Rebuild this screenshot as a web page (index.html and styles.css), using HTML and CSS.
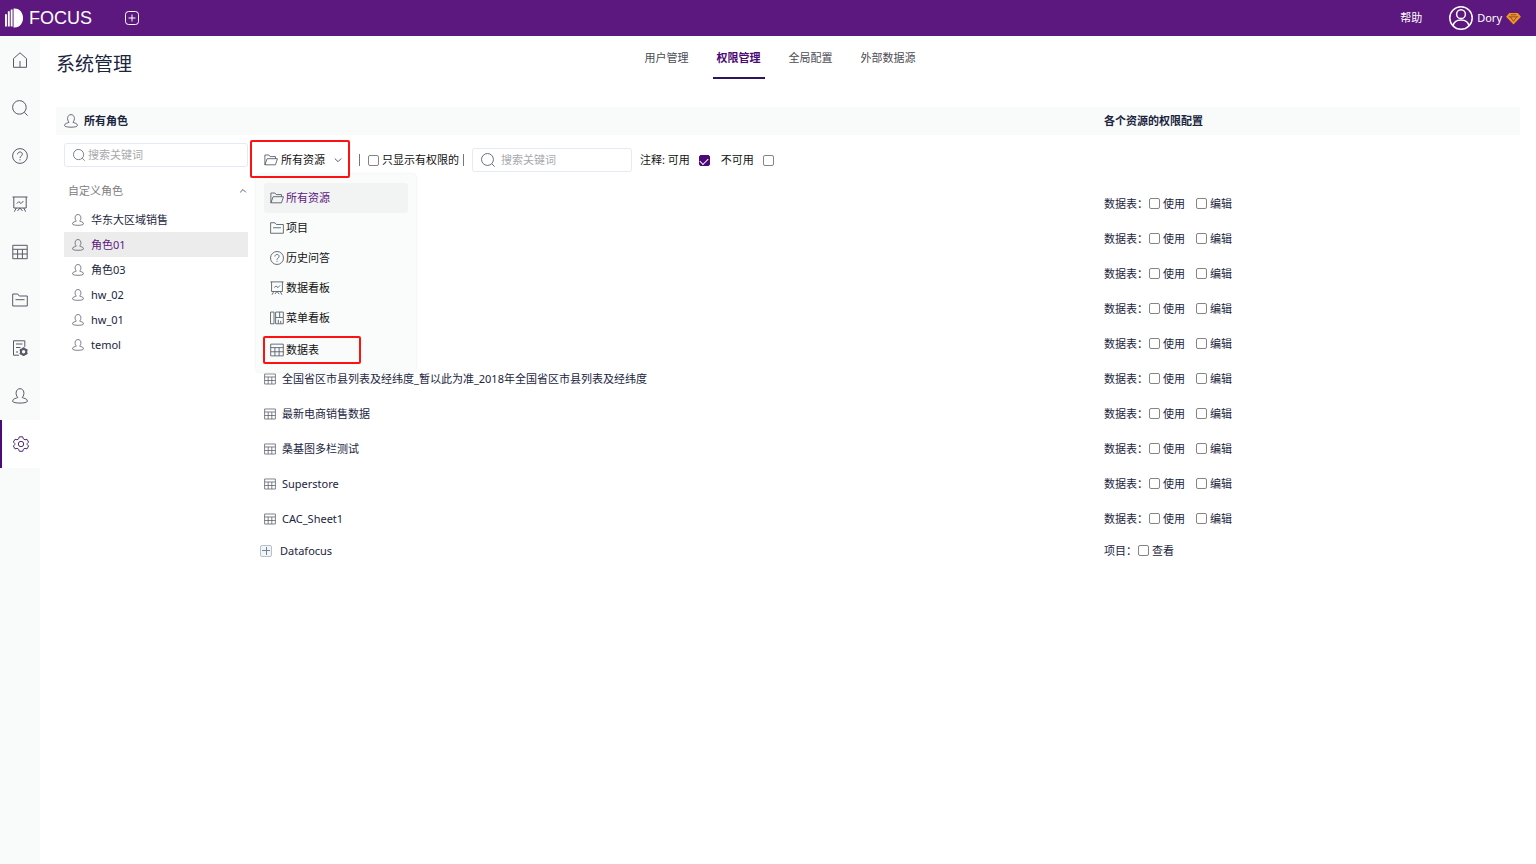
FILE: index.html
```html
<!DOCTYPE html>
<html lang="zh-CN">
<head>
<meta charset="utf-8">
<title>系统管理</title>
<link rel="stylesheet" href="styles.css">
</head>
<body>
<svg class="sprite" aria-hidden="true">
  <symbol id="i-home" viewBox="0 0 16 16"><path d="M1.5 6.6 8 .8l6.5 5.8v8.7h-13zM8 15V9"/></symbol>
  <symbol id="i-search" viewBox="0 0 16 16"><circle cx="7.4" cy="7.4" r="6.8"/><path d="m12.3 12.3 3.3 3.3"/></symbol>
  <symbol id="i-help" viewBox="0 0 16 16"><circle cx="8" cy="8" r="7.4"/><path d="M5.6 6.3C5.6 3.2 10.4 3.2 10.4 6.2 10.4 8 8 8 8 10M8 11.2v1.2"/></symbol>
  <symbol id="i-board" viewBox="0 0 16 16"><path d="M.5 1h15M1.8 1v11h12.4V1M4.8 7.6l2-2 2.2 2 2.4-2.600M4.300 12l-2 3.700M11.700 12l2 3.700M5.500 15 8 12l2.500 3"/></symbol>
  <symbol id="i-table" viewBox="0 0 16 16"><path d="M.8 1.3h14.4v13.4H.8zM.8 5.3h14.4M.8 10h14.4M5.6 5.3v9.4M10.4 5.3v9.4"/></symbol>
  <symbol id="i-folder" viewBox="0 0 16 16"><path d="M.7 14V2h5l1.6 2h8v10zM3.5 7.7h9"/></symbol>
  <symbol id="i-open" viewBox="0 0 16 16"><path d="M1 13.5V2.3h4.6l1.5 1.8h6v2.4M1 13.5 3.6 6.5h11.8l-2.3 7z"/></symbol>
  <symbol id="i-doc" viewBox="0 0 16 16"><path d="M7 15.2H1.5V.8h11.3v6M4 4h6.5M4 7.5h4.500M4 12h2"/><circle cx="11.6" cy="11.7" r="2.700" stroke-width="2"/><path d="M11.6 7.300v1.700M11.6 14.400v1.600M7.800 9.500l1.500.9M13.9 13l1.500.9M7.800 13.900l1.500-.9M13.900 10.400l1.500-.9" stroke-width="2"/></symbol>
  <symbol id="i-user" viewBox="0 0 16 16"><path d="M5.8 9.5C3 6.700 3.600.7 8 .7s5 6 2.200 8.800c1.500 1 5.200.8 5.200 3.700 0 2.500-14.800 2.500-14.800 0 0-2.900 3.700-2.700 5.200-3.700z"/></symbol>
  <symbol id="i-gear" viewBox="0 0 16 16"><circle cx="8" cy="8" r="2.700"/><path d="M6.300.8h3.400l.6 2 1.700 1 2-.5 1.600 2.800-1.400 1.500v1l1.400 1.400-1.600 2.900-2-.6-1.700 1-.6 2H6.300l-.6-2-1.700-1-2 .6L.4 10l1.400-1.400v-1L.4 6.100 2 3.300l2 .5 1.700-1z"/></symbol>
  <symbol id="i-menu" viewBox="0 0 16 16"><path d="M.6 1.200h4v13.400h-4zM6.400 1.200h8.800v6M6.400 1.200v13.400h8.800v-7M6.400 7.400h8.800M9.500 14V10M12.200 14v-2.700M11 1.200v6"/></symbol>
  <symbol id="i-plus" viewBox="0 0 16 16"><rect x="1.500" y="1.500" width="13" height="13" rx="3"/><path d="M8 4.500v7M4.500 8h7"/></symbol>
  <symbol id="i-down" viewBox="0 0 8 8"><path d="m.8 2.500 3.200 3.200 3.200-3.200"/></symbol>
  <symbol id="i-up" viewBox="0 0 8 8"><path d="m1.200 5.300 2.800-2.800 2.800 2.800"/></symbol>
  <symbol id="i-avatar" viewBox="0 0 24 24"><circle cx="12" cy="12" r="11.200"/><circle cx="12" cy="8.200" r="4.400"/><path d="M4 20c1.500-8 14.500-8 16 0"/></symbol>
</svg>

<header class="topbar">
  <a class="brand" href="#">
    <svg class="brand-mark" viewBox="0 0 20 20"><path d="M0 6h2v13H0zM3 3h2v16H3zM6 1h2v18H6zM9 0h1v20H9zM10 0c12 0 12 20 0 20z"/></svg>
    <span>FOCUS</span>
  </a>
  <button class="add" aria-label="新建"><svg class="icon"><use href="#i-plus"/></svg></button>
  <a class="help" href="#">帮助</a>
  <button class="account">
    <svg class="avatar"><use href="#i-avatar"/></svg>
    <span>Dory</span>
    <svg class="gem" viewBox="0 0 16 14"><path class="gem-body" d="M3.500 1h9L16 5.200 8 13.500 0 5.200z"/><path class="gem-line" d="M3 5.200h10M4.500 5l3.500 5 3.500-5M5 3h6"/></svg>
  </button>
</header>

<div class="shell">
  <nav class="rail">
    <a href="#" aria-label="首页"><svg class="icon"><use href="#i-home"/></svg></a>
    <a href="#" aria-label="搜索"><svg class="icon"><use href="#i-search"/></svg></a>
    <a href="#" aria-label="问答"><svg class="icon"><use href="#i-help"/></svg></a>
    <a href="#" aria-label="看板"><svg class="icon"><use href="#i-board"/></svg></a>
    <a href="#" aria-label="数据表"><svg class="icon"><use href="#i-table"/></svg></a>
    <a href="#" aria-label="项目"><svg class="icon"><use href="#i-folder"/></svg></a>
    <a href="#" aria-label="任务"><svg class="icon"><use href="#i-doc"/></svg></a>
    <a href="#" aria-label="用户"><svg class="icon"><use href="#i-user"/></svg></a>
    <a href="#" aria-label="系统" class="active"><svg class="icon"><use href="#i-gear"/></svg></a>
  </nav>

  <main class="page">
    <div class="page-head">
      <h1>系统管理</h1>
      <nav class="tabs">
        <a href="#">用户管理</a>
        <a href="#" class="current">权限管理</a>
        <a href="#">全局配置</a>
        <a href="#">外部数据源</a>
      </nav>
    </div>

    <div class="band">
      <h2><svg class="icon-m"><use href="#i-user"/></svg>所有角色</h2>
      <h2 class="band-right">各个资源的权限配置</h2>
    </div>

    <div class="columns">
      <aside class="roles">
        <label class="search">
          <svg class="icon-s"><use href="#i-search"/></svg>
          <input type="text" placeholder="搜索关键词" aria-label="搜索角色">
        </label>
        <button class="group">自定义角色<svg class="chev"><use href="#i-up"/></svg></button>
        <ul class="role-list">
          <li><button><svg class="icon-s"><use href="#i-user"/></svg>华东大区域销售</button></li>
          <li><button class="selected"><svg class="icon-s"><use href="#i-user"/></svg>角色01</button></li>
          <li><button><svg class="icon-s"><use href="#i-user"/></svg>角色03</button></li>
          <li><button><svg class="icon-s"><use href="#i-user"/></svg>hw_02</button></li>
          <li><button><svg class="icon-s"><use href="#i-user"/></svg>hw_01</button></li>
          <li><button><svg class="icon-s"><use href="#i-user"/></svg>temol</button></li>
        </ul>
      </aside>

      <section class="resources">
        <div class="toolbar">
          <div class="filter">
            <button class="filter-button marked" aria-haspopup="true" aria-expanded="true">
              <svg class="icon-m"><use href="#i-open"/></svg>所有资源<svg class="chev"><use href="#i-down"/></svg>
            </button>
            <div class="menu">
              <button class="selected"><svg class="icon-m"><use href="#i-open"/></svg>所有资源</button>
              <button><svg class="icon-m"><use href="#i-folder"/></svg>项目</button>
              <button><svg class="icon-m"><use href="#i-help"/></svg>历史问答</button>
              <button><svg class="icon-m"><use href="#i-board"/></svg>数据看板</button>
              <button><svg class="icon-m"><use href="#i-menu"/></svg>菜单看板</button>
              <button class="marked"><svg class="icon-m"><use href="#i-table"/></svg>数据表</button>
            </div>
          </div>
          <label class="only"><input type="checkbox">只显示有权限的</label>
          <label class="search wide">
            <svg class="icon-m"><use href="#i-search"/></svg>
            <input type="text" placeholder="搜索关键词" aria-label="搜索资源">
          </label>
          <div class="legend">
            <label>注释: 可用<input type="checkbox" checked></label>
            <label>不可用<input type="checkbox"></label>
          </div>
        </div>

        <table class="grid">
          <tbody>
            <tr><td></td><td class="perm"><div>数据表：<label><input type="checkbox">使用</label><label><input type="checkbox">编辑</label></div></td></tr>
            <tr><td></td><td class="perm"><div>数据表：<label><input type="checkbox">使用</label><label><input type="checkbox">编辑</label></div></td></tr>
            <tr><td></td><td class="perm"><div>数据表：<label><input type="checkbox">使用</label><label><input type="checkbox">编辑</label></div></td></tr>
            <tr><td></td><td class="perm"><div>数据表：<label><input type="checkbox">使用</label><label><input type="checkbox">编辑</label></div></td></tr>
            <tr><td></td><td class="perm"><div>数据表：<label><input type="checkbox">使用</label><label><input type="checkbox">编辑</label></div></td></tr>
            <tr><td><div class="name"><svg class="icon-s"><use href="#i-table"/></svg>全国省区市县列表及经纬度_暂以此为准_2018年全国省区市县列表及经纬度</div></td><td class="perm"><div>数据表：<label><input type="checkbox">使用</label><label><input type="checkbox">编辑</label></div></td></tr>
            <tr><td><div class="name"><svg class="icon-s"><use href="#i-table"/></svg>最新电商销售数据</div></td><td class="perm"><div>数据表：<label><input type="checkbox">使用</label><label><input type="checkbox">编辑</label></div></td></tr>
            <tr><td><div class="name"><svg class="icon-s"><use href="#i-table"/></svg>桑基图多栏测试</div></td><td class="perm"><div>数据表：<label><input type="checkbox">使用</label><label><input type="checkbox">编辑</label></div></td></tr>
            <tr><td><div class="name"><svg class="icon-s"><use href="#i-table"/></svg>Superstore</div></td><td class="perm"><div>数据表：<label><input type="checkbox">使用</label><label><input type="checkbox">编辑</label></div></td></tr>
            <tr><td><div class="name"><svg class="icon-s"><use href="#i-table"/></svg>CAC_Sheet1</div></td><td class="perm"><div>数据表：<label><input type="checkbox">使用</label><label><input type="checkbox">编辑</label></div></td></tr>
            <tr class="project"><td><div class="name"><button class="expand" aria-label="展开"></button>Datafocus</div></td><td class="perm"><div>项目：<label><input type="checkbox">查看</label></div></td></tr>
          </tbody>
        </table>
      </section>
    </div>
  </main>
</div>
</body>
</html>
```
FILE: styles.css
```css
* { box-sizing: border-box; }

body {
  margin: 0;
  min-height: 100vh;
  display: flex;
  flex-direction: column;
  background: #fff;
  color: #1b2540;
  font: 11px/16px "Noto Sans", "Noto Sans CJK SC", sans-serif;
}

a { color: inherit; text-decoration: none; }
button { border: 0; padding: 0; background: none; color: inherit; font: inherit; cursor: pointer; }
h1, h2, ul { margin: 0; padding: 0; }
ul { list-style: none; }

svg { flex: none; fill: none; stroke: #555b66; stroke-width: 1; }
.sprite { position: absolute; width: 0; height: 0; }
.icon { width: 16px; height: 16px; }
.icon-m { width: 14px; height: 14px; }
.icon-s { width: 12px; height: 12px; }
.chev { width: 8px; height: 8px; }

/* Top bar */
.topbar {
  height: 36px;
  padding: 0 16px 0 5px;
  display: flex;
  align-items: center;
  background: #5c187e;
  color: #fff;
}
.brand { display: flex; align-items: center; gap: 5px; font: 18px/20px "Liberation Sans", sans-serif; }
.brand-mark { width: 19px; height: 20px; fill: #fff; stroke: none; }
.add { display: flex; margin-left: 32px; }
.topbar .icon, .avatar { stroke: #fff; }
.help { margin-left: auto; }
.account { display: flex; align-items: center; gap: 4px; margin-left: 27px; }
.avatar { width: 24px; height: 24px; stroke-width: 1.500; }
.gem { width: 15px; height: 13px; margin-right: -1px; }
.gem-body { fill: #f2961d; stroke: none; }
.gem-line { stroke: #8a4a3c; }

/* Side rail */
.shell { flex: 1; display: flex; }
.rail { width: 40px; background: #f9fbfb; }
.rail a { height: 48px; display: flex; align-items: center; justify-content: center; }
.rail .active { border-left: 2px solid #4b0a75; background: #fff; }
.rail .active svg { stroke: #4d2a72; }

.page { flex: 1; min-width: 0; padding: 0 16px; }
.page-head { height: 71px; display: grid; grid-template-columns: 1fr auto 1fr; align-items: start; }
.page-head h1 { padding-top: 14px; font-size: 19px; line-height: 28px; font-weight: 400; }
.tabs { display: flex; gap: 20px; margin-right: 16px; padding-top: 6px; color: #4c4c55; }
.tabs a { padding: 8px 4px 11px; border-bottom: 2px solid transparent; }
.tabs .current { border-color: #2b1560; color: #4b0a75; font-weight: 700; }

.band {
  height: 28px;
  padding-left: 8px;
  display: flex;
  align-items: center;
  justify-content: space-between;
  background: #f9fbfb;
}
.band h2 { display: flex; align-items: center; gap: 6px; font-size: 11px; font-weight: 700; }
.band .band-right { width: 416px; }

.columns { display: flex; padding-left: 8px; }

/* Roles */
.roles { width: 184px; padding-top: 8px; }
.search {
  height: 24px;
  padding: 0 8px;
  display: flex;
  align-items: center;
  gap: 3px;
  border: 1px solid #e4eaf3;
  border-radius: 3px;
}
.search input { flex: 1; min-width: 0; padding: 0; border: 0; outline: 0; background: none; font: inherit; }
.search input::placeholder { color: #a9a9ad; }
.group {
  width: 100%;
  height: 24px;
  margin: 12px 0 4px;
  padding: 0 1px 0 4px;
  display: flex;
  align-items: center;
  justify-content: space-between;
  color: #808084;
}
.role-list button { width: 100%; height: 25px; padding-left: 8px; display: flex; align-items: center; gap: 7px; }
.role-list .selected { background: #ececec; color: #5c187e; }

/* Resources */
.resources { flex: 1; min-width: 0; padding-left: 8px; }
.toolbar { height: 50px; display: flex; align-items: center; color: #111; }
.filter { position: relative; margin: 0 0 2px -6px; }
.filter-button {
  position: relative;
  z-index: 3;
  width: 100px;
  height: 38px;
  padding: 2px 6px 0 12px;
  display: flex;
  align-items: center;
  gap: 3px;
}
.filter-button .chev { margin-left: auto; }
.filter-button.marked, .menu .marked { border: 2px solid #f11; border-radius: 2px; }
.menu {
  position: absolute;
  z-index: 2;
  top: 34px;
  left: 6px;
  width: 160px;
  padding: 9px 8px 8px;
  background: #fafcfb;
  border-radius: 4px;
  box-shadow: 0 0 3px #e4e8e8;
}
.menu button { width: 100%; height: 30px; padding-left: 6px; display: flex; align-items: center; gap: 2px; border-radius: 3px; }
.menu .selected { background: #f2f3f3; color: #5c187e; }
.menu .marked { width: 98px; height: 28px; margin: 3px 0 0 -1px; padding-left: 5px; }

input[type="checkbox"] {
  appearance: none;
  width: 11px;
  height: 11px;
  margin: 0;
  flex: none;
  border: 1px solid #858585;
  border-radius: 2px;
  background: #fff;
}
input[type="checkbox"]:checked {
  border-color: #4b0a75;
  background: #4b0a75;
  display: grid;
  place-items: center;
}
input[type="checkbox"]:checked::after {
  content: "";
  width: 7px;
  height: 4px;
  border: solid #fff;
  border-width: 0 0 1px 1px;
  rotate: -45deg;
}

.only {
  height: 12px;
  margin: 0 8px 0 9px;
  padding: 0 4px 0 8px;
  display: flex;
  align-items: center;
  gap: 3px;
  border: solid #777;
  border-width: 0 1px;
}
.search.wide { width: 160px; gap: 6px; }
.legend { display: flex; gap: 11px; margin-left: 8px; }
.legend label { display: flex; align-items: center; gap: 9px; }

.grid { width: 100%; margin-top: 1px; border-collapse: collapse; table-layout: fixed; }
.grid td { height: 35px; padding: 0; vertical-align: middle; }
.grid .perm { width: 416px; }
.grid .project td { height: 29px; }
.name { display: flex; align-items: center; gap: 6px; padding-left: 8px; }
.project .name { padding-left: 4px; gap: 8px; }
.perm div { display: flex; align-items: center; }
.perm label { display: flex; align-items: center; gap: 3px; margin: 0 10px 0 1px; }
.expand {
  width: 12px;
  height: 12px;
  border: 1px solid #b5c0cc;
  border-radius: 2px;
  background:
    linear-gradient(#77818e, #77818e) center / 8px 1px no-repeat,
    linear-gradient(#77818e, #77818e) center / 1px 8px no-repeat,
    #f1f5f8;
}
```
